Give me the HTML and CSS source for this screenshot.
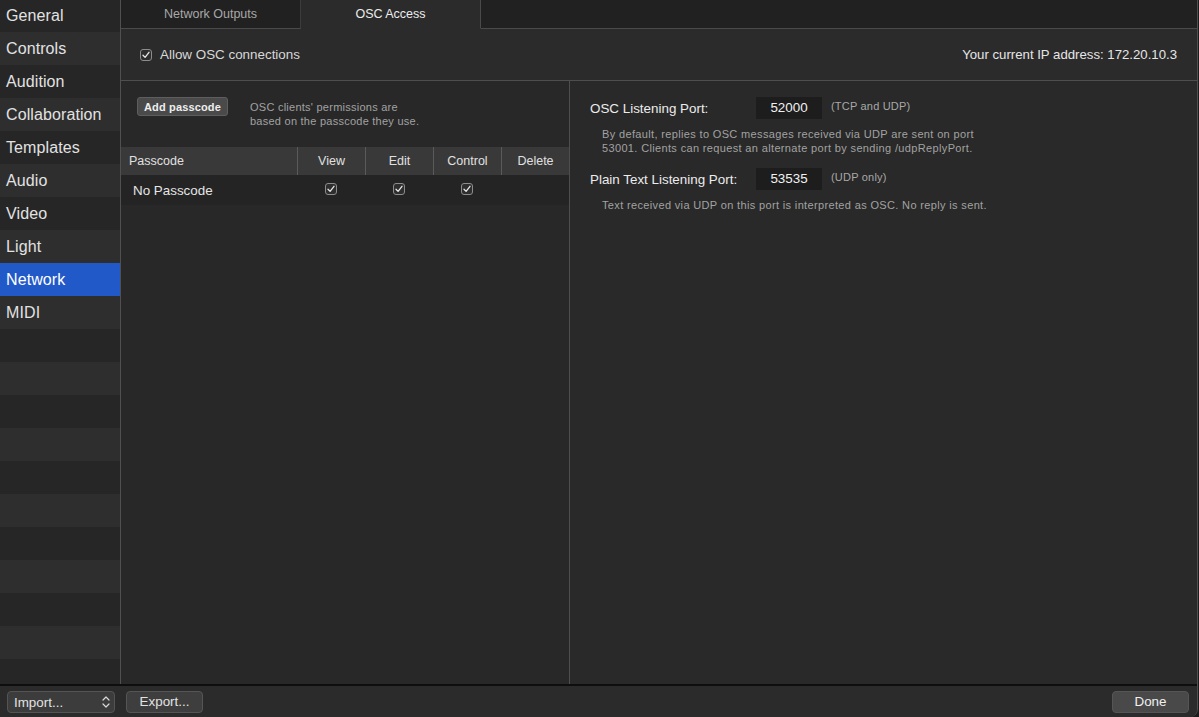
FILE: index.html
```html
<!DOCTYPE html>
<html>
<head>
<meta charset="utf-8">
<link rel="stylesheet" href="styles.css">
</head>
<body>
<div class="window">
  <div class="main">
    <nav class="sidebar">
      <div class="side-item">General</div>
      <div class="side-item">Controls</div>
      <div class="side-item">Audition</div>
      <div class="side-item">Collaboration</div>
      <div class="side-item">Templates</div>
      <div class="side-item">Audio</div>
      <div class="side-item">Video</div>
      <div class="side-item">Light</div>
      <div class="side-item active">Network</div>
      <div class="side-item">MIDI</div>
    </nav>
    <section class="content">
      <div class="tabs">
        <div class="tab">Network Outputs</div>
        <div class="tab selected">OSC Access</div>
        <div class="tab-fill"></div>
      </div>
      <div class="topbar">
        <label class="check-label">
          <svg class="cb" width="12" height="12" viewBox="0 0 12 12"><rect x="0.5" y="0.5" width="11" height="11" rx="2.5" fill="#2e2e2e" stroke="#8c8c8c"/><path d="M3 6.2 L5.1 8.4 L9 3.3" fill="none" stroke="#e6e6e6" stroke-width="1.3" stroke-linecap="round" stroke-linejoin="round"/></svg>
          <span>Allow OSC connections</span>
        </label>
        <div class="ip">Your current IP address: 172.20.10.3</div>
      </div>
      <div class="panes">
        <div class="left-pane">
          <div class="pass-head">
            <button class="small-btn">Add passcode</button>
            <p class="hint">OSC clients' permissions are<br>based on the passcode they use.</p>
          </div>
          <div class="table">
            <div class="th first">Passcode</div>
            <div class="th">View</div>
            <div class="th">Edit</div>
            <div class="th">Control</div>
            <div class="th">Delete</div>
            <div class="td first">No Passcode</div>
            <div class="td"><svg class="cb" width="12" height="12" viewBox="0 0 12 12"><rect x="0.5" y="0.5" width="11" height="11" rx="2.5" fill="#2e2e2e" stroke="#8c8c8c"/><path d="M3 6.2 L5.1 8.4 L9 3.3" fill="none" stroke="#e6e6e6" stroke-width="1.3" stroke-linecap="round" stroke-linejoin="round"/></svg></div>
            <div class="td"><svg class="cb" width="12" height="12" viewBox="0 0 12 12"><rect x="0.5" y="0.5" width="11" height="11" rx="2.5" fill="#2e2e2e" stroke="#8c8c8c"/><path d="M3 6.2 L5.1 8.4 L9 3.3" fill="none" stroke="#e6e6e6" stroke-width="1.3" stroke-linecap="round" stroke-linejoin="round"/></svg></div>
            <div class="td"><svg class="cb" width="12" height="12" viewBox="0 0 12 12"><rect x="0.5" y="0.5" width="11" height="11" rx="2.5" fill="#2e2e2e" stroke="#8c8c8c"/><path d="M3 6.2 L5.1 8.4 L9 3.3" fill="none" stroke="#e6e6e6" stroke-width="1.3" stroke-linecap="round" stroke-linejoin="round"/></svg></div>
            <div class="td"></div>
          </div>
        </div>
        <div class="right-pane">
          <div class="port-row">
            <span class="port-label">OSC Listening Port:</span>
            <span class="port-field">52000</span>
            <span class="port-note">(TCP and UDP)</span>
          </div>
          <p class="desc">By default, replies to OSC messages received via UDP are sent on port<br>53001. Clients can request an alternate port by sending /udpReplyPort.</p>
          <div class="port-row">
            <span class="port-label">Plain Text Listening Port:</span>
            <span class="port-field">53535</span>
            <span class="port-note">(UDP only)</span>
          </div>
          <p class="desc">Text received via UDP on this port is interpreted as OSC. No reply is sent.</p>
        </div>
      </div>
    </section>
  </div>
  <footer class="bottombar">
    <div class="select">
      <span>Import...</span>
      <svg width="8" height="14" viewBox="0 0 8 14"><path d="M1 5 L4 2 L7 5" fill="none" stroke="#d8d8d8" stroke-width="1.2" stroke-linecap="round" stroke-linejoin="round"/><path d="M1 9 L4 12 L7 9" fill="none" stroke="#d8d8d8" stroke-width="1.2" stroke-linecap="round" stroke-linejoin="round"/></svg>
    </div>
    <button class="btn">Export...</button>
    <div class="spacer"></div>
    <button class="btn done">Done</button>
  </footer>
</div>
</body>
</html>
```

FILE: styles.css
```css
* { box-sizing: border-box; }
html, body {
  margin: 0;
  padding: 0;
  background: #1c1c1c;
  font-family: "Liberation Sans", Arial, sans-serif;
  color: #e4e4e4;
}
.window {
  width: 1198px;
  height: 717px;
  display: flex;
  flex-direction: column;
  border-right: 1px solid #505050;
  border-bottom-right-radius: 8px;
  overflow: hidden;
  background: #2a2a2a;
}
.main {
  flex: 1;
  display: flex;
  min-height: 0;
}
.sidebar {
  width: 121px;
  flex: none;
  border-right: 1px solid #505050;
  background: repeating-linear-gradient(to bottom, #262626 0, #262626 33px, #2e2e2e 33px, #2e2e2e 66px);
  background-position: 0 -1px;
  display: flex;
  flex-direction: column;
}
.side-item {
  height: 33px;
  flex: none;
  display: flex;
  align-items: center;
  padding-left: 6px;
  font-size: 16px;
  color: #e2e2e2;
  letter-spacing: 0.1px;
}
.side-item:first-child {
  height: 32px;
}
.side-item.active {
  background: #2159c9;
  color: #ffffff;
}
.content {
  flex: 1;
  display: flex;
  flex-direction: column;
  min-width: 0;
  background: #2a2a2a;
}
.tabs {
  height: 29px;
  flex: none;
  display: flex;
  background: #212121;
}
.tab {
  width: 180px;
  display: flex;
  align-items: center;
  justify-content: center;
  font-size: 12.5px;
  color: #a8a8a8;
  border-bottom: 1px solid #4a4a4a;
  border-right: 1px solid #3c3c3c;
  padding-bottom: 1px;
}
.tab.selected {
  background: #2b2b2b;
  color: #ececec;
  border-bottom: 1px solid #2b2b2b;
  border-right: 1px solid #4a4a4a;
}
.tab-fill {
  flex: 1;
  border-bottom: 1px solid #4a4a4a;
}
.topbar {
  height: 52px;
  flex: none;
  display: flex;
  align-items: center;
  justify-content: space-between;
  padding: 0 20px 0 19px;
  background: #2b2b2b;
  border-bottom: 1px solid #4e4e4e;
}
.check-label {
  display: flex;
  align-items: center;
  gap: 8px;
  font-size: 13.4px;
  color: #d8d8d8;
}
.cb { display: block; }
.ip {
  font-size: 13.2px;
  color: #e6e6e6;
}
.panes {
  flex: 1;
  display: flex;
  min-height: 0;
}
.left-pane {
  width: 449px;
  flex: none;
  border-right: 1px solid #4e4e4e;
  background: #282828;
}
.pass-head {
  display: flex;
  align-items: flex-start;
  padding: 16px 0 0 16px;
  height: 66px;
}
.small-btn {
  height: 19px;
  padding: 0 6px;
  font-family: inherit;
  font-size: 11px;
  font-weight: bold;
  color: #eeeeee;
  background: #4a4a4a;
  border: 1px solid #5e5e5e;
  border-radius: 3px;
  letter-spacing: 0.15px;
}
.hint {
  margin: 3px 0 0 22px;
  font-size: 11px;
  line-height: 14px;
  color: #a2a2a2;
  letter-spacing: 0.25px;
}
.table {
  display: grid;
  grid-template-columns: 176px 68px 68px 68px 68px;
}
.th {
  height: 28px;
  background: #393939;
  display: flex;
  align-items: center;
  justify-content: center;
  font-size: 12.5px;
  color: #e0e0e0;
  border-left: 1px solid #5a5a5a;
}
.th.first {
  justify-content: flex-start;
  padding-left: 8px;
  border-left: none;
}
.td {
  height: 30px;
  background: #242424;
  display: flex;
  align-items: center;
  justify-content: center;
  padding-bottom: 2px;
}
.td.first {
  justify-content: flex-start;
  padding-left: 12px;
  font-size: 13.4px;
  color: #e6e6e6;
  padding-bottom: 0;
}
.right-pane {
  flex: 1;
  padding: 16px 0 0 20px;
  background: #292929;
}
.port-row {
  display: flex;
  align-items: center;
  height: 22px;
}
.port-label {
  width: 166px;
  font-size: 13.4px;
  color: #ececec;
}
.port-field {
  width: 66px;
  height: 22px;
  background: #1d1d1d;
  display: flex;
  align-items: center;
  justify-content: center;
  font-size: 13.4px;
  color: #f0f0f0;
  padding-bottom: 1px;
}
.port-note {
  margin-left: 9px;
  font-size: 11px;
  color: #a8a8a8;
  align-self: flex-start;
  margin-top: 3px;
  letter-spacing: 0.2px;
}
.desc {
  margin: 8px 0 13px 12px;
  font-size: 11px;
  line-height: 14px;
  color: #a2a2a2;
  letter-spacing: 0.35px;
}
.bottombar {
  height: 33px;
  flex: none;
  display: flex;
  align-items: center;
  padding: 1px 8px 0 7px;
  border-top: 2px solid #0e0e0e;
  background: #2b2b2b;
}
.select {
  width: 108px;
  height: 22px;
  display: flex;
  align-items: center;
  justify-content: space-between;
  padding: 0 4px 0 6px;
  background: #3c3c3c;
  border: 1px solid #545454;
  border-radius: 4px;
  font-size: 13.4px;
  color: #e2e2e2;
}
.btn {
  height: 22px;
  width: 77px;
  margin-left: 11px;
  font-family: inherit;
  font-size: 13.4px;
  color: #e2e2e2;
  background: #3e3e3e;
  border: 1px solid #555555;
  border-radius: 4px;
  padding: 0 0 1px 0;
}
.spacer { flex: 1; }
.btn.done {
  margin-left: 0;
  background: #494949;
  color: #f0f0f0;
}
```
